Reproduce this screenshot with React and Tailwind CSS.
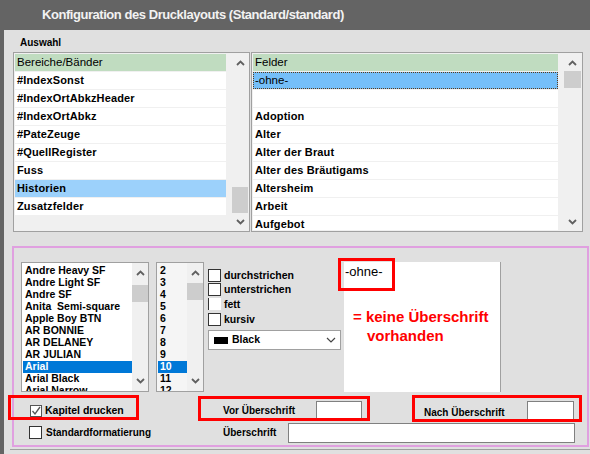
import React from "react";

const Up = () => (
  <svg width="9" height="6" viewBox="0 0 9 6">
    <path d="M1 5 L4.5 1.5 L8 5" fill="none" stroke="#606060" strokeWidth="1.8" />
  </svg>
);
const Down = () => (
  <svg width="9" height="6" viewBox="0 0 9 6">
    <path d="M1 1 L4.5 4.5 L8 1" fill="none" stroke="#606060" strokeWidth="1.8" />
  </svg>
);

function Scroll({ upH, thumb, downH, width }) {
  return (
    <div className={"flex flex-col bg-[#f0f0f0] shrink-0 " + width}>
      <div className={"flex items-center justify-center shrink-0 " + upH}>
        <Up />
      </div>
      <div className="flex-1 min-h-0">
        <div className={"bg-[#cdcdcd] " + thumb} />
      </div>
      <div className={"flex items-center justify-center shrink-0 " + downH}>
        <Down />
      </div>
    </div>
  );
}

const leftRows = [
  "#IndexSonst",
  "#IndexOrtAbkzHeader",
  "#IndexOrtAbkz",
  "#PateZeuge",
  "#QuellRegister",
  "Fuss",
  "Historien",
  "Zusatzfelder",
];
const rightRows = [
  "",
  "Adoption",
  "Alter",
  "Alter der Braut",
  "Alter des Bräutigams",
  "Altersheim",
  "Arbeit",
  "Aufgebot",
];
const fonts = [
  "Andre Heavy SF",
  "Andre Light SF",
  "Andre SF",
  "Anita  Semi-square",
  "Apple Boy BTN",
  "AR BONNIE",
  "AR DELANEY",
  "AR JULIAN",
  "Arial",
  "Arial Black",
  "Arial Narrow",
];
const sizes = ["2", "3", "4", "5", "6", "7", "8", "9", "10", "11", "12"];

function Check({ label, variant, h }) {
  return (
    <div className={"flex items-start " + h}>
      {variant === "partial" ? (
        <span className="w-[13px] h-[12px] bg-white border-l border-[#333] shrink-0" />
      ) : (
        <span className="w-[13px] h-[13px] bg-white border border-[#333] shrink-0" />
      )}
      <span className="ml-[3px] text-[10.5px] leading-[13px] font-bold text-black whitespace-nowrap">{label}</span>
    </div>
  );
}

export default function App() {
  return (
    <div className="w-[590px] h-[454px] bg-[#646464] flex flex-col overflow-hidden font-['Liberation_Sans',Arial,sans-serif] text-black">
      <div className="h-[30px] shrink-0 pl-[42px] flex items-center text-[#f2f2f2] font-bold text-[13px] tracking-[-0.45px]">
        Konfiguration des Drucklayouts (Standard/standard)
      </div>
      <div className="flex-1 ml-[4px] bg-[#e0e0e0] flex flex-col">
        <div className="pt-[8px] pl-[16px] h-[22px] text-[10px] leading-[10px] font-bold">Auswahl</div>
        <div className="flex ml-[9px] h-[180px] gap-[1px]">
          {/* left list */}
          <div className="w-[237px] h-full border border-[#a0a0a0] bg-[#f0f0f0] p-[1px] flex">
            <div className="w-[211px] flex flex-col overflow-hidden">
              <div className="h-[17px] mb-[1px] bg-[#c0dcc0] pl-[2px] flex items-center text-[11.5px]">Bereiche/Bänder</div>
              {leftRows.map((r) => (
                <div
                  key={r}
                  className={
                    "h-[17px] mb-[1px] pl-[2px] flex items-center text-[11px] font-bold tracking-[0.15px] " +
                    (r === "Historien" ? "bg-[#9cd1fb]" : "bg-white")
                  }
                >
                  {r}
                </div>
              ))}
            </div>
            <div className="w-[6px]" />
            <Scroll width="w-[16px]" upH="h-[17px]" downH="h-[17px]" thumb="mt-[116px] h-[26px]" />
          </div>
          {/* right list */}
          <div className="w-[332px] h-full border border-[#a0a0a0] bg-[#f0f0f0] p-[1px] flex">
            <div className="w-[305px] flex flex-col overflow-hidden">
              <div className="h-[17px] mb-[1px] bg-[#c0dcc0] pl-[2px] flex items-center text-[11.5px]">Felder</div>
              <div className="h-[17px] mb-[1px] bg-[#75bff9] border border-dotted border-[#5a3a1a] pl-[1px] flex items-center text-[11.5px]">
                -ohne-
              </div>
              {rightRows.map((r, i) => (
                <div key={i} className="h-[17px] mb-[1px] shrink-0 bg-white pl-[2px] flex items-center text-[11px] font-bold tracking-[0.15px]">
                  {r}
                </div>
              ))}
            </div>
            <div className="w-[6px]" />
            <Scroll width="w-[17px]" upH="h-[17px]" downH="h-[17px]" thumb="h-[17px]" />
          </div>
        </div>

        {/* bottom panel */}
        <div className="mt-[14px] ml-[6px] w-[580px] h-[204px] border-b border-[#a0a0a0] pl-[2px]">
          <div className="relative w-[577px] h-[201px] border-2 border-[#e0a0e0] flex flex-col">
            <div className="flex mt-[14px] h-[130px]">
              {/* font list */}
              <div className="ml-[7px] w-[128px] h-full border border-[#a0a0a0] bg-white flex">
                <div className="flex-1 pt-[2px] pl-[1px] overflow-hidden">
                  {fonts.map((f) => (
                    <div
                      key={f}
                      className={
                        "h-[12px] pl-[2px] flex items-center text-[10.5px] font-bold whitespace-pre " +
                        (f === "Arial" ? "bg-[#0078d7] text-white" : "")
                      }
                    >
                      {f}
                    </div>
                  ))}
                </div>
                <Scroll width="w-[16px]" upH="h-[20px]" downH="h-[20px]" thumb="mt-[2px] h-[17px]" />
              </div>
              {/* size list */}
              <div className="ml-[7px] w-[48px] h-full border border-[#a0a0a0] bg-[#f5f5f5] flex">
                <div className="flex-1 pt-[2px] pl-[1px] overflow-hidden">
                  {sizes.map((s) => (
                    <div
                      key={s}
                      className={
                        "h-[12px] pl-[2px] flex items-center text-[10.5px] font-bold " +
                        (s === "10" ? "bg-[#0078d7] text-white" : "")
                      }
                    >
                      {s}
                    </div>
                  ))}
                </div>
                <Scroll width="w-[16px]" upH="h-[19px]" downH="h-[20px]" thumb="mt-[1px] h-[17px]" />
              </div>
              {/* options */}
              <div className="ml-[4px] w-[133px] flex flex-col pt-[7px]">
                <Check label="durchstrichen" h="h-[14px]" />
                <Check label="unterstrichen" h="h-[15px]" />
                <Check label="fett" variant="partial" h="h-[15px]" />
                <Check label="kursiv" h="h-[15px]" />
                <div className="mt-[2px] h-[20px] w-[133px] bg-white border border-[#a0a0a0] flex items-center pl-[5px] pr-[4px]">
                  <span className="w-[14px] h-[7px] bg-black" />
                  <span className="ml-[4px] text-[10.5px] font-bold flex-1">Black</span>
                  <svg width="10" height="6" viewBox="0 0 10 6">
                    <path d="M1 1 L5 5 L9 1" fill="none" stroke="#444" strokeWidth="1.2" />
                  </svg>
                </div>
              </div>
              {/* preview */}
              <div className="ml-[3px] w-[157px] h-full bg-white border-r border-[#a0a0a0] flex flex-col">
                <div className="pl-[1px] pt-[2px] text-[13px] leading-[15px]">-ohne-</div>
                <div className="mt-[28px] pl-[9px] text-[15px] leading-[19px] font-bold text-[#ff0000] whitespace-nowrap">
                  <div>= keine Überschrift</div>
                  <div className="pl-[14px]">vorhanden</div>
                </div>
              </div>
            </div>

            {/* row 1 */}
            <div className="flex items-center mt-[9px] h-[19px] pl-[16px]">
              <div className="w-[193px] flex items-center">
                <span className="w-[12px] h-[12px] bg-white border border-[#555] flex items-center justify-center">
                  <svg width="10" height="10" viewBox="0 0 10 10">
                    <path d="M1.5 5 L4 8 L9 1" fill="none" stroke="#555" strokeWidth="1.3" />
                  </svg>
                </span>
                <span className="ml-[3px] text-[10.5px] font-bold">Kapitel drucken</span>
              </div>
              <div className="w-[93px] text-[10px] font-bold">Vor Überschrift</div>
              <div className="w-[46px] h-[19px] bg-white border border-[#808080]" />
              <div className="w-[62px]" />
              <div className="w-[103px] pt-[3px] text-[10px] font-bold">Nach Überschrift</div>
              <div className="w-[47px] h-[19px] bg-white border border-[#808080]" />
            </div>
            {/* row 2 */}
            <div className="flex items-center mt-[3px] h-[19px] pl-[15px]">
              <div className="w-[194px] flex items-center">
                <span className="w-[13px] h-[13px] bg-white border border-[#333]" />
                <span className="ml-[4px] text-[10px] font-bold">Standardformatierung</span>
              </div>
              <div className="w-[65px] text-[10px] font-bold">Überschrift</div>
              <div className="w-[287px] h-[20px] bg-white border border-[#808080]" />
            </div>

            {/* annotations */}
            <div className="absolute left-[-6px] top-[147px] w-[131px] h-[25px] border-[3px] border-[#ff0000]" />
            <div className="absolute left-[184px] top-[148px] w-[172px] h-[25px] border-[3px] border-[#ff0000]" />
            <div className="absolute left-[398px] top-[147px] w-[170px] h-[27px] border-[3px] border-[#ff0000]" />
            <div className="absolute left-[324px] top-[10px] w-[57px] h-[33px] border-[3px] border-[#ff0000]" />
          </div>
        </div>
      </div>
    </div>
  );
}
